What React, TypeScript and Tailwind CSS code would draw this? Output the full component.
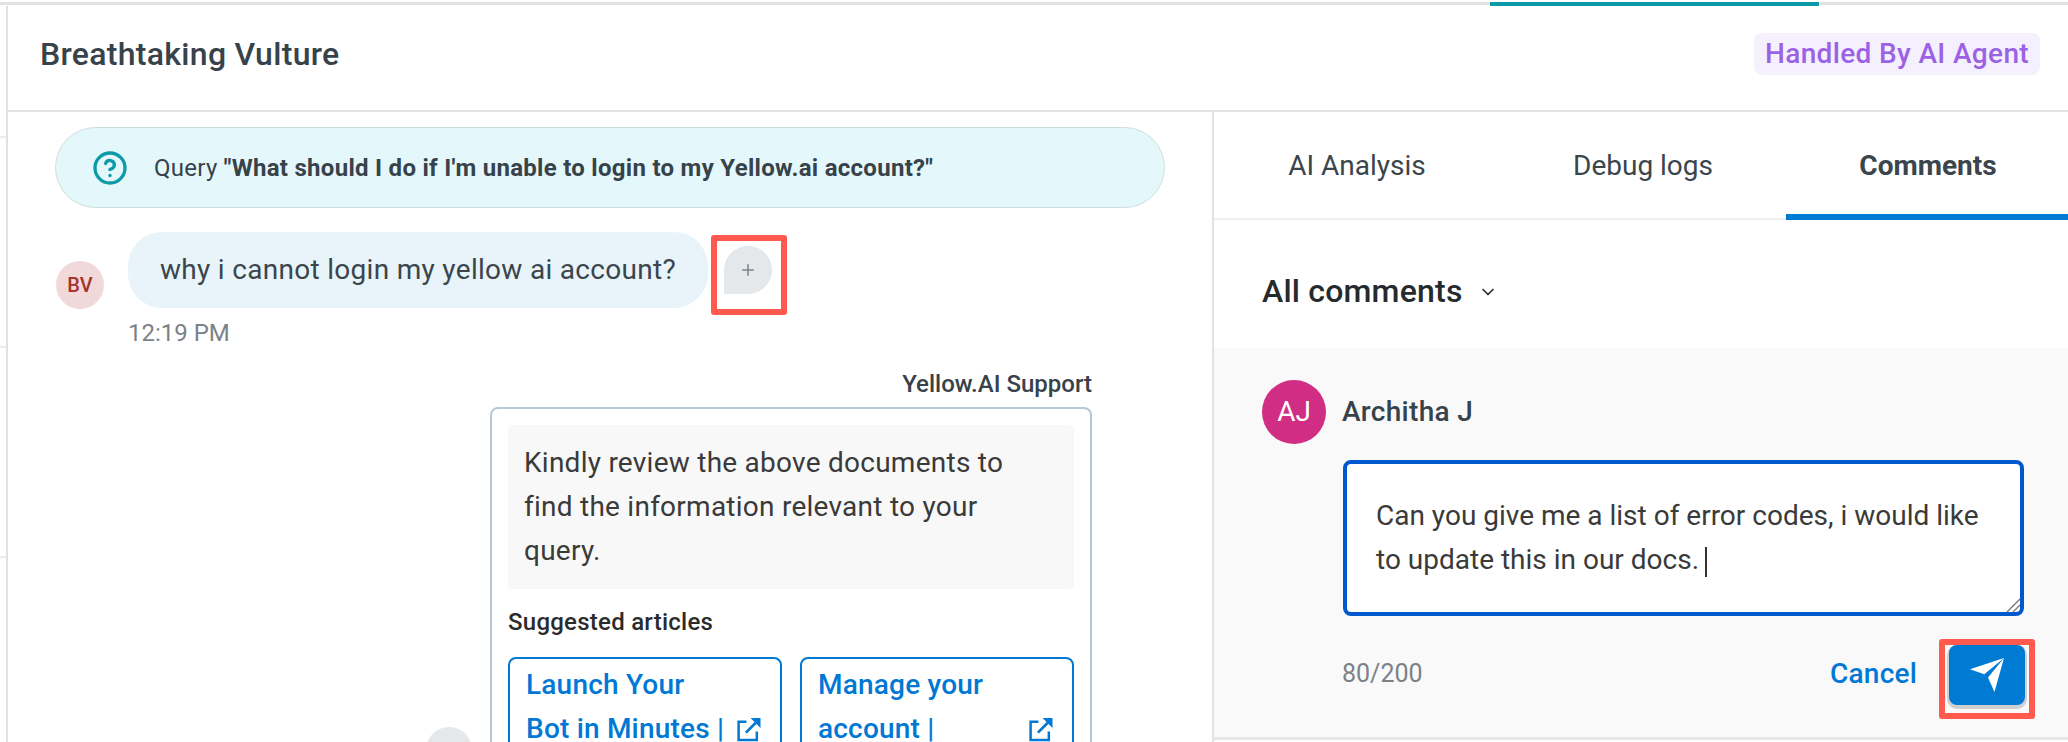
import React from 'react';
import { ChevronDown, CircleHelp, Plus } from 'lucide-react';

function ExternalIcon() {
  return (
    <svg width="25" height="25" viewBox="0 0 24 24" fill="none" className="shrink-0">
      <path d="M10 4.5H2.5V22H20V14" stroke="#0078d4" strokeWidth="2.4" />
      <path d="M9.5 15L19 5.5" stroke="#0078d4" strokeWidth="2.6" />
      <path d="M14 1H23.5V10.5Z" fill="#0078d4" />
    </svg>
  );
}

function SendIcon() {
  return (
    <svg width="34" height="34" viewBox="150 115 100 100" fill="#ffffff">
      <path d="M150 148L250 115L192 163Z" />
      <path d="M250 115L203 172L222 215Z" />
    </svg>
  );
}

export default function App() {
  return (
    <div className="w-[2068px] h-[742px] overflow-hidden bg-white font-['Roboto',sans-serif] text-[#37424a]">
      {/* TOP RULE */}
      <div className="flex h-[6px] pt-[2px] bg-white">
        <div className="w-[1490px] h-[3px] bg-[#e2e2e2]" />
        <div className="w-[329px] h-[4px] bg-[#0b9aa8]" />
        <div className="flex-1 h-[3px] bg-[#e2e2e2]" />
      </div>

      <div className="flex h-[736px]">
        {/* ROWS OF THE TABLE BEHIND */}
        <div className="w-[8px] shrink-0 border-r-2 border-[#e2e2e2] pt-[130px]">
          <div className="h-[2px] w-[6px] bg-[#ececec]" />
          <div className="h-[2px] w-[6px] bg-[#ececec] mt-[208px]" />
          <div className="h-[2px] w-[6px] bg-[#ececec] mt-[208px]" />
        </div>

        <div className="flex-1 min-w-0 flex flex-col">
          {/* HEADER */}
          <div className="h-[106px] shrink-0 border-b-2 border-[#e2e2e2] flex items-center justify-between pl-[32px] pr-[28px] pb-[8px]">
            <h1 className="text-[32px] tracking-[0.3px] font-medium leading-none">Breathtaking Vulture</h1>
            <span className="h-[42px] px-[11px] rounded-lg bg-[#f5f0fd] text-[#9b62e6] text-[28px] tracking-[0.35px] font-medium flex items-center">
              Handled By AI Agent
            </span>
          </div>

          <div className="flex flex-1 min-h-0">
            {/* CONVERSATION */}
            <div className="w-[1206px] shrink-0 border-r-2 border-[#e2e2e2] overflow-hidden pl-[47px] pr-[47px] pt-[15px]">
              <div className="h-[81px] rounded-[41px] border border-[#cfdedd] bg-[#e4f8fb] flex items-center pl-[36px] gap-[26px]">
                <CircleHelp size={36} strokeWidth={2.2} className="text-[#0b9aa8] shrink-0" />
                <p className="text-[24px] tracking-[0.28px]">
                  Query <span className="font-bold">"What should I do if I'm unable to login to my Yellow.ai account?"</span>
                </p>
              </div>

              <div className="flex mt-[24px] pl-[1px]">
                <div className="w-[48px] h-[48px] mt-[29px] rounded-full bg-[#f2d9d9] text-[#a5332e] text-[20px] font-medium flex items-center justify-center shrink-0">
                  BV
                </div>
                <div className="ml-[24px]">
                  <div className="flex">
                    <div className="w-[580px] h-[76px] rounded-[34px] bg-[#e8f4f9] flex items-center pl-[32px] text-[28px] tracking-[0.3px] text-[#3a454c]">
                      why i cannot login my yellow ai account?
                    </div>
                    <div className="w-[76px] h-[80px] mt-[3px] ml-[3px] border-[6px] border-[#ff5a4d] rounded-[3px] pl-[7px] pt-[5px]">
                      <div className="w-[48px] h-[48px] rounded-full rounded-bl-none bg-[#e4e8eb] flex items-center justify-center">
                        <Plus size={18} className="text-[#7a858c]" />
                      </div>
                    </div>
                  </div>
                  <p className="text-[24px] text-[#7a8288] leading-none mt-[6px]">12:19 PM</p>
                </div>
              </div>

              <p className="text-right text-[24px] font-medium leading-none mt-[27px] pr-[73px]">Yellow.AI Support</p>

              <div className="flex justify-end pr-[73px] mt-[11px]">
                <div className="w-[46px] h-[46px] mt-[320px] mr-[18px] rounded-full bg-[#e4e8eb] shrink-0" />
                <div className="w-[602px] rounded-lg border-2 border-[#b8c6d6] p-[16px]">
                  <div className="h-[164px] rounded bg-[#f8f8f8] pl-[16px] pr-[60px] py-[16px] text-[28px] tracking-[0.25px] leading-[44px] text-[#3a3a3a]">
                    Kindly review the above documents to find the information relevant to your query.
                  </div>
                  <p className="text-[24px] tracking-[0.25px] font-medium text-[#2b2b2b] leading-none mt-[21px]">Suggested articles</p>
                  <div className="grid grid-cols-2 gap-[18px] mt-[23px]">
                    <div className="h-[160px] rounded-lg border-2 border-[#0078d4] px-[16px] pt-[4px] text-[28px] tracking-[0.2px] font-medium leading-[44px] text-[#0078d4]">
                      <p>Launch Your</p>
                      <div className="flex items-center justify-between pr-[3px]">
                        <span>Bot in Minutes |</span>
                        <ExternalIcon />
                      </div>
                    </div>
                    <div className="h-[160px] rounded-lg border-2 border-[#0078d4] px-[16px] pt-[4px] text-[28px] tracking-[0.2px] font-medium leading-[44px] text-[#0078d4]">
                      <p>Manage your</p>
                      <div className="flex items-center justify-between pr-[3px]">
                        <span>account |</span>
                        <ExternalIcon />
                      </div>
                    </div>
                  </div>
                </div>
              </div>
            </div>

            {/* SIDE PANEL */}
            <div className="flex-1 min-w-0">
              <div className="h-[108px] grid grid-cols-[286px_286px_1fr] border-b-2 border-[#f0f0f0] text-[28px] text-[#3a454c]">
                <div className="flex items-center justify-center pt-[2px]">AI Analysis</div>
                <div className="flex items-center justify-center pt-[2px]">Debug logs</div>
                <div className="flex items-center justify-center font-bold border-b-[6px] border-[#007bd3] -mb-[2px] pt-[6px] pl-[2px]">
                  Comments
                </div>
              </div>

              <div className="h-[128px] flex items-center pl-[48px] pt-[14px] gap-[15px] text-[#262a2d]">
                <span className="text-[32px] tracking-[0.2px] font-medium">All comments</span>
                <ChevronDown size={20} strokeWidth={2} className="mt-[2px]" />
              </div>

              <div className="h-[392px] bg-[#f9f9f9] border-b-[3px] border-[#e5e5e5] pl-[48px] pt-[32px]">
                <div className="flex items-center gap-[16px]">
                  <div className="w-[64px] h-[64px] rounded-full bg-[#d22d84] text-white text-[28px] flex items-center justify-center">
                    AJ
                  </div>
                  <span className="text-[28px] tracking-[0.3px] font-medium">Architha J</span>
                </div>

                <div className="ml-[81px] mt-[16px] w-[681px]">
                  <div className="relative h-[156px] rounded-lg border-4 border-[#0059cc] bg-white pl-[29px] pr-[20px] pt-[30px] text-[28px] leading-[44px] text-[#3a3a3a]">
                    Can you give me a list of error codes, i would like to update this in our docs.
                    <span className="inline-block align-middle w-[2px] h-[30px] bg-[#333] ml-[6px]" />
                    <svg width="14" height="14" viewBox="0 0 14 14" className="absolute right-0 bottom-0" fill="none" stroke="#777" strokeWidth="1.4">
                      <path d="M1 14L14 1M7 14L14 7" />
                    </svg>
                  </div>
                  <div className="flex items-center justify-between mt-[23px]">
                    <span className="text-[25px] text-[#7a8288] mb-[10px] -ml-[1px]">80/200</span>
                    <div className="flex items-center gap-[22px] -mr-[11px]">
                      <span className="text-[28px] tracking-[0.2px] font-medium text-[#0078d4] mb-[10px]">Cancel</span>
                      <div className="w-[96px] h-[80px] border-[6px] border-[#ff5a4d] rounded-[3px] flex justify-center">
                        <button className="w-[76px] h-[60px] rounded-lg bg-[#007bd3] shadow-[0_2px_0_2px_#d0d0d0] flex items-center justify-center">
                          <SendIcon />
                        </button>
                      </div>
                    </div>
                  </div>
                </div>
              </div>
            </div>
          </div>
        </div>
      </div>
    </div>
  );
}
